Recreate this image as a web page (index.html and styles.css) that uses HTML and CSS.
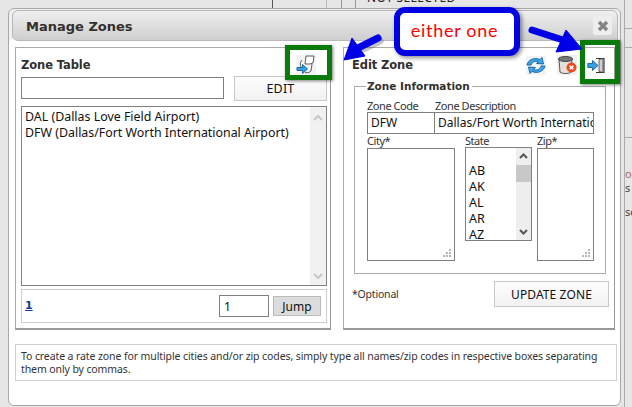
FILE: index.html
```html
<!DOCTYPE html>
<html lang="en">
<head>
<meta charset="utf-8">
<title>Manage Zones</title>
<link rel="stylesheet" href="styles.css">
</head>
<body>
<div class="backdrop" aria-hidden="true">
  <span class="bd-v bd-v1"></span><span class="bd-v bd-v2"></span><span class="bd-v bd-v3"></span><span class="bd-v bd-v4"></span><span class="bd-v bd-v5"></span>
  <span class="bd-h bd-h1"></span><span class="bd-h bd-h2"></span><span class="bd-h bd-h3"></span><span class="bd-h bd-h4"></span>
  <span class="bd-top">NOT SELECTED</span>
  <span class="bd-t bd-t1">ort</span><span class="bd-t bd-t2">s</span><span class="bd-t bd-t3">se</span>
</div>

<div class="modal">
  <header class="title">
    <h1>Manage Zones</h1>
    <span class="close"><svg width="12" height="12" viewBox="0 0 12 12"><path d="M2 2l8 8M10 2l-8 8" stroke="#858585" stroke-width="3.4"/></svg></span>
  </header>
  <div class="panels">
    <section class="panel left">
      <div class="panel-head">
        <h2>Zone Table</h2>
        <svg class="icon copy" width="20" height="20" viewBox="0 0 20 20">
          <rect width="20" height="20" fill="#f3f3f5"/>
          <path d="M10 1h8l-1 7-3 1H9z" fill="#fff" stroke="#4a4a4a" stroke-width=".9"/>
          <path d="M6 5C4 7 4 10 5 12M16 9l-1 7c-1 1.500-4 2-6 1.500" fill="none" stroke="#4a4a4a" stroke-width=".9"/>
          <path d="M1 12.500h5.500V9.500l5 4.500-5 4.500v-3H1z" fill="#39a0e6" stroke="#0d5f9e" stroke-width=".9"/>
        </svg>
      </div>
      <div class="search-row">
        <input class="field search" type="text">
        <span class="btn edit">EDIT</span>
      </div>
      <div class="list">
        <div class="list-items">
          <div>DAL (Dallas Love Field Airport)</div>
          <div>DFW (Dallas/Fort Worth International Airport)</div>
        </div>
        <div class="scroll pale">
          <svg width="16" height="14" viewBox="0 0 16 14"><path d="M4 9l4-4 4 4" fill="none" stroke="#c8c8c8" stroke-width="2"/></svg>
          <svg width="16" height="14" viewBox="0 0 16 14"><path d="M4 5l4 4 4-4" fill="none" stroke="#c8c8c8" stroke-width="2"/></svg>
        </div>
      </div>
      <div class="pager">
        <a class="page" href="#">1</a>
        <input class="field jump-input" type="text" value="1">
        <span class="jump">Jump</span>
      </div>
    </section>

    <section class="panel right">
      <div class="panel-head edit-head">
        <h2>Edit Zone</h2>
        <svg class="icon" width="20" height="19" viewBox="0 0 20 19">
          <rect width="20" height="19" fill="#f3f3f6"/>
          <path d="M1 9C2 4 8 1 14 3.500l2-2 1.500 6.500-7-.5 2-2C9 4.500 6 6 5 9z" fill="#3fa6ea" stroke="#0b5f9e" stroke-width=".9"/>
          <path d="M19 10c-1 5-7 8-13 5.500l-2 2-1.500-6.500 7 .5-2 2c3.500 1.500 6.500 0 7.500-3.500z" fill="#3fa6ea" stroke="#0b5f9e" stroke-width=".9"/>
        </svg>
        <svg class="icon del" width="20" height="20" viewBox="0 0 20 20">
          <rect width="20" height="20" fill="#f1f0f0"/>
          <path d="M2 4l1 13c2 2 9 2 11 0l1-13z" fill="#e4e1da" stroke="#555"/>
          <ellipse cx="8.500" cy="4" rx="7" ry="2.500" fill="#777" stroke="#444"/>
          <circle cx="14.500" cy="12.500" r="5" fill="#ee4a1e"/>
          <path d="M12.700 10.700l3.600 3.600M16.300 10.700l-3.600 3.600" stroke="#fff" stroke-width="1.600"/>
        </svg>
        <svg class="icon door" width="18" height="17" viewBox="0 0 18 17">
          <path d="M9 1.500h8v14H9" fill="#fff" stroke="#333" stroke-width="1.100"/>
          <path d="M12 2.500l4-1v14l-4-1z" fill="#cfcfcf" stroke="#444" stroke-width=".8"/>
          <path d="M.8 6.500h4.700V3.500l5.500 5-5.500 5v-3H.8z" fill="#39a0e6" stroke="#0d5f9e" stroke-width=".9"/>
        </svg>
      </div>
      <fieldset class="info">
        <legend>Zone Information</legend>
        <div class="code-grid">
          <label>Zone Code</label><label>Zone Description</label>
          <div class="field cell code">DFW</div>
          <div class="field cell desc">Dallas/Fort Worth International Airport</div>
        </div>
        <div class="areas">
          <div class="col city">
            <label>City*</label>
            <div class="field area"><svg class="grip" width="9" height="9" viewBox="0 0 9 9"><path d="M7 1h2v2H7zM4 4h2v2H4zM7 4h2v2H7zM1 7h2v2H1zM4 7h2v2H4zM7 7h2v2H7z" fill="#b5b5b5"/></svg></div>
          </div>
          <div class="col state">
            <label>State</label>
            <div class="field select">
              <div class="options"><div>&nbsp;</div><div>AB</div><div>AK</div><div>AL</div><div>AR</div><div>AZ</div></div>
              <div class="scroll">
                <svg width="15" height="17" viewBox="0 0 15 17"><path d="M4 10l3.500-3.500L11 10" fill="none" stroke="#555" stroke-width="2"/></svg>
                <span class="thumb"></span>
                <svg class="down" width="15" height="17" viewBox="0 0 15 17"><path d="M4 7l3.500 3.500L11 7" fill="none" stroke="#555" stroke-width="2"/></svg>
              </div>
            </div>
          </div>
          <div class="col zip">
            <label>Zip*</label>
            <div class="field area"><svg class="grip" width="9" height="9" viewBox="0 0 9 9"><path d="M7 1h2v2H7zM4 4h2v2H4zM7 4h2v2H7zM1 7h2v2H1zM4 7h2v2H4zM7 7h2v2H7z" fill="#b5b5b5"/></svg></div>
          </div>
        </div>
      </fieldset>
      <div class="foot">
        <span class="optional">*Optional</span>
        <span class="btn update">UPDATE ZONE</span>
      </div>
    </section>
  </div>
  <p class="note">To create a rate zone for multiple cities and/or zip codes, simply type all names/zip codes in respective boxes separating them only by commas.</p>
</div>

<div class="mark mark-left"></div>
<div class="mark mark-right"></div>
<svg class="arrows" width="632" height="407" viewBox="0 0 632 407" aria-hidden="true">
  <path d="M379 39L358 49" stroke="#555" stroke-opacity=".35" stroke-width="7" stroke-linecap="round" transform="translate(1 2)"/>
  <path d="M378 38L358 48" stroke="#0000e6" stroke-width="7" stroke-linecap="round"/>
  <path d="M344 60L352 38 365 56z" fill="#0000e6" stroke="#0000e6" stroke-linejoin="round"/>
  <path d="M532 30L566 41" stroke="#0000e6" stroke-width="7" stroke-linecap="round"/>
  <path d="M582 49L556 52 566 30z" fill="#0000e6" stroke="#0000e6" stroke-linejoin="round"/>
</svg>
<div class="callout">either one</div>
</body>
</html>
```

FILE: styles.css
```css
* { box-sizing: border-box; }
html, body { margin: 0; height: 100%; }
body {
  width: 632px; height: 407px; overflow: hidden; position: relative;
  background: #e6e6e6; color: #111;
  font: 12px "Noto Sans", "Open Sans", sans-serif;
}
.backdrop { position: absolute; inset: 0; }
.backdrop span { position: absolute; }
.bd-v { width: 1px; background: #999; }
.bd-v1 { left: 272px; top: 0; height: 8px; background: #555; }
.bd-v2 { left: 326px; top: 0; height: 8px; background: #bbb; }
.bd-v3 { left: 341px; top: 0; height: 8px; }
.bd-v4 { left: 355px; top: 0; height: 8px; }
.bd-v5 { left: 624px; top: 0; height: 407px; background: #aaa; }
.bd-h { height: 1px; background: #aaa; }
.bd-h1 { left: 330px; width: 70px; top: 9px; }
.bd-h2 { left: 624px; width: 8px; top: 28px; }
.bd-h3 { left: 624px; width: 8px; top: 47px; }
.bd-h4 { left: 624px; width: 8px; top: 137px; }
.bd-top { left: 367px; top: -9px; font-size: 12px; line-height: 14px; letter-spacing: .4px; color: #222; white-space: nowrap; }
.bd-t { left: 625px; font-size: 11px; line-height: 12px; color: #444; white-space: nowrap; }
.bd-t1 { top: 168px; color: #a66; }
.bd-t2 { top: 182px; }
.bd-t3 { top: 206px; }

.modal {
  position: absolute; left: 8px; top: 8px; width: 613px; height: 398px;
  background: #fff; border: 1px solid #a8a8a8; border-radius: 6px;
  padding: 1px 5px 0 6px;
  box-shadow: inset 0 30px 0 #f0f0f0;
}
.title {
  height: 31px; margin: 0 -3px 6px -3px; padding: 2px 5px 0 13px;
  display: flex; align-items: center; justify-content: space-between;
  border: 1px solid #b8b8b8; border-radius: 6px 6px 0 6px;
  background: linear-gradient(#efefef, #cfcfcf);
}
h1 { margin: 0; font: bold 13px/1 "DejaVu Sans", sans-serif; color: #33302c; }
.close {
  width: 19px; height: 19px; border-radius: 3px; background: #eeeeee; margin-top: -2px;
  display: flex; align-items: center; justify-content: center;
}
.panels { display: flex; gap: 12px; height: 283px; }
.panel {
  border: 1px solid #aaa; border-right-color: #999; border-bottom: 2px solid #999;
  background: #fff;
}
.left { width: 317px; padding: 0 3px 0 5px; display: flex; flex-direction: column; }
.right { width: 275px; padding: 0 8px; display: flex; flex-direction: column; }
.panel-head { height: 27px; display: flex; align-items: center; padding-top: 8px; }
h2 { margin: 0; font: bold 11.500px/1 "DejaVu Sans", sans-serif; color: #33302c; flex: 1; letter-spacing: -.1px; }
.copy { margin-right: 11px; margin-top: -2px; }
.edit-head { padding-right: 0; margin-right: 1px; }
.edit-head .icon { margin-top: -1px; }
.icon { flex: none; }
.edit-head .del { margin: -1px 10px 0 11px; }

.field { border: 1px solid #808080; background: #fff; padding: 0; border-radius: 0; outline: 0; }
.search-row { display: flex; align-items: center; justify-content: space-between; height: 26px; }
.search { width: 203px; height: 22px; }
.btn {
  display: flex; align-items: center; justify-content: center;
  border: 1px solid #c8c8c8; background: linear-gradient(#fdfdfd, #f2f2f2);
  font-size: 12.500px; color: #111;
}
.edit { width: 93px; height: 25px; letter-spacing: .2px; }
.list {
  margin-top: 5px; width: 306px; height: 180px; border: 1px solid #808080;
  display: flex; justify-content: space-between; flex: none;
}
.list-items { padding: 2px 3px; font-size: 12.400px; line-height: 16px; white-space: nowrap; }
.scroll {
  width: 16px; background: #eeeeee; display: flex; flex-direction: column;
  justify-content: space-between; flex: none; align-items: center;
}
.pale { background: #f1f1f1; padding: 4px 0 2px; }
.pager {
  margin-top: 3px; width: 306px; height: 34px; border: 1px solid #ccc;
  display: flex; align-items: center; padding: 0 5px 0 3px;
}
.page { font: bold 11px "DejaVu Sans", sans-serif; color: #123c9c; margin-right: auto; margin-top: -2px; }
.jump-input { width: 50px; height: 22px; padding-left: 4px; font: 12px "Noto Sans", sans-serif; color: #111; }
.jump {
  width: 48px; height: 20px; margin-left: 4px; background: #dcdcdc; border: 1px solid #bbb;
  display: flex; align-items: center; justify-content: center; font-size: 12px;
}

.info {
  margin: 4px 0 0 2px; padding: 0 11px 0 12px; width: 252px; height: 195px;
  border: 1px solid #aaa; min-width: 0;
}
legend { padding: 0 2px 0 1px; font: bold 10.500px/14px "DejaVu Sans", sans-serif; color: #33302c; margin-left: -1px; }
label { display: block; font-size: 11px; letter-spacing: -.45px; line-height: 13px; color: #333; white-space: nowrap; }
.code-grid { display: grid; grid-template-columns: 68px 159px; margin-top: 6px; }
.cell { height: 22px; line-height: 20px; font-size: 12px; padding-left: 3px; overflow: hidden; white-space: nowrap; color: #111; }
.desc { margin-left: -1px; width: 160px; }
.areas { display: flex; margin-top: 0; }
.col { position: relative; }
.city { width: 98px; }
.state { width: 72px; }
.zip { width: 57px; }
.area { height: 113px; margin-top: 1px; position: relative; }
.city .area { width: 88px; }
.zip .area { width: 57px; }
.grip { position: absolute; right: 3px; bottom: 3px; }
.select { width: 67px; height: 94px; display: flex; overflow: hidden; }
.options { flex: 1; padding: 0 3px; margin-top: -1px; font-size: 12.500px; line-height: 16px; white-space: nowrap; }
.scroll .thumb { width: 15px; height: 17px; background: #c8c8c8; margin-bottom: auto; }
.state .scroll { width: 15px; justify-content: flex-start; }
.foot { display: flex; align-items: center; justify-content: space-between; margin-top: 7px; margin-right: -3px; }
.optional { font-size: 10.500px; letter-spacing: -.2px; color: #333; margin-top: -1px; }
.update { width: 115px; height: 26px; letter-spacing: .1px; font-size: 12px; }
.note {
  margin: 14px 0 0 0; width: 602px; height: 37px; padding: 5px 4px 0 5px;
  border: 1px solid #d0d0d0; font-size: 10.500px; letter-spacing: -.1px; line-height: 13px; color: #333;
}

.mark { position: absolute; border: 5px solid #0a7a0a; box-shadow: 1px 1px 3px rgba(0,0,0,.5); }
.mark-left { left: 285px; top: 45px; width: 47px; height: 35px; }
.mark-right { left: 580px; top: 40px; width: 40px; height: 44px; }
.arrows { position: absolute; left: 0; top: 0; }
.callout {
  position: absolute; left: 394px; top: 7px; width: 126px; height: 49px;
  border: 6px solid #0000e0; border-radius: 11px; background: #fff;
  box-shadow: 2px 2px 4px rgba(0,0,0,.45);
  display: flex; align-items: center; justify-content: center;
  padding: 0 5px 3px 0;
  font: 18px "Lato", sans-serif; color: #f00; letter-spacing: .7px;
}
```
